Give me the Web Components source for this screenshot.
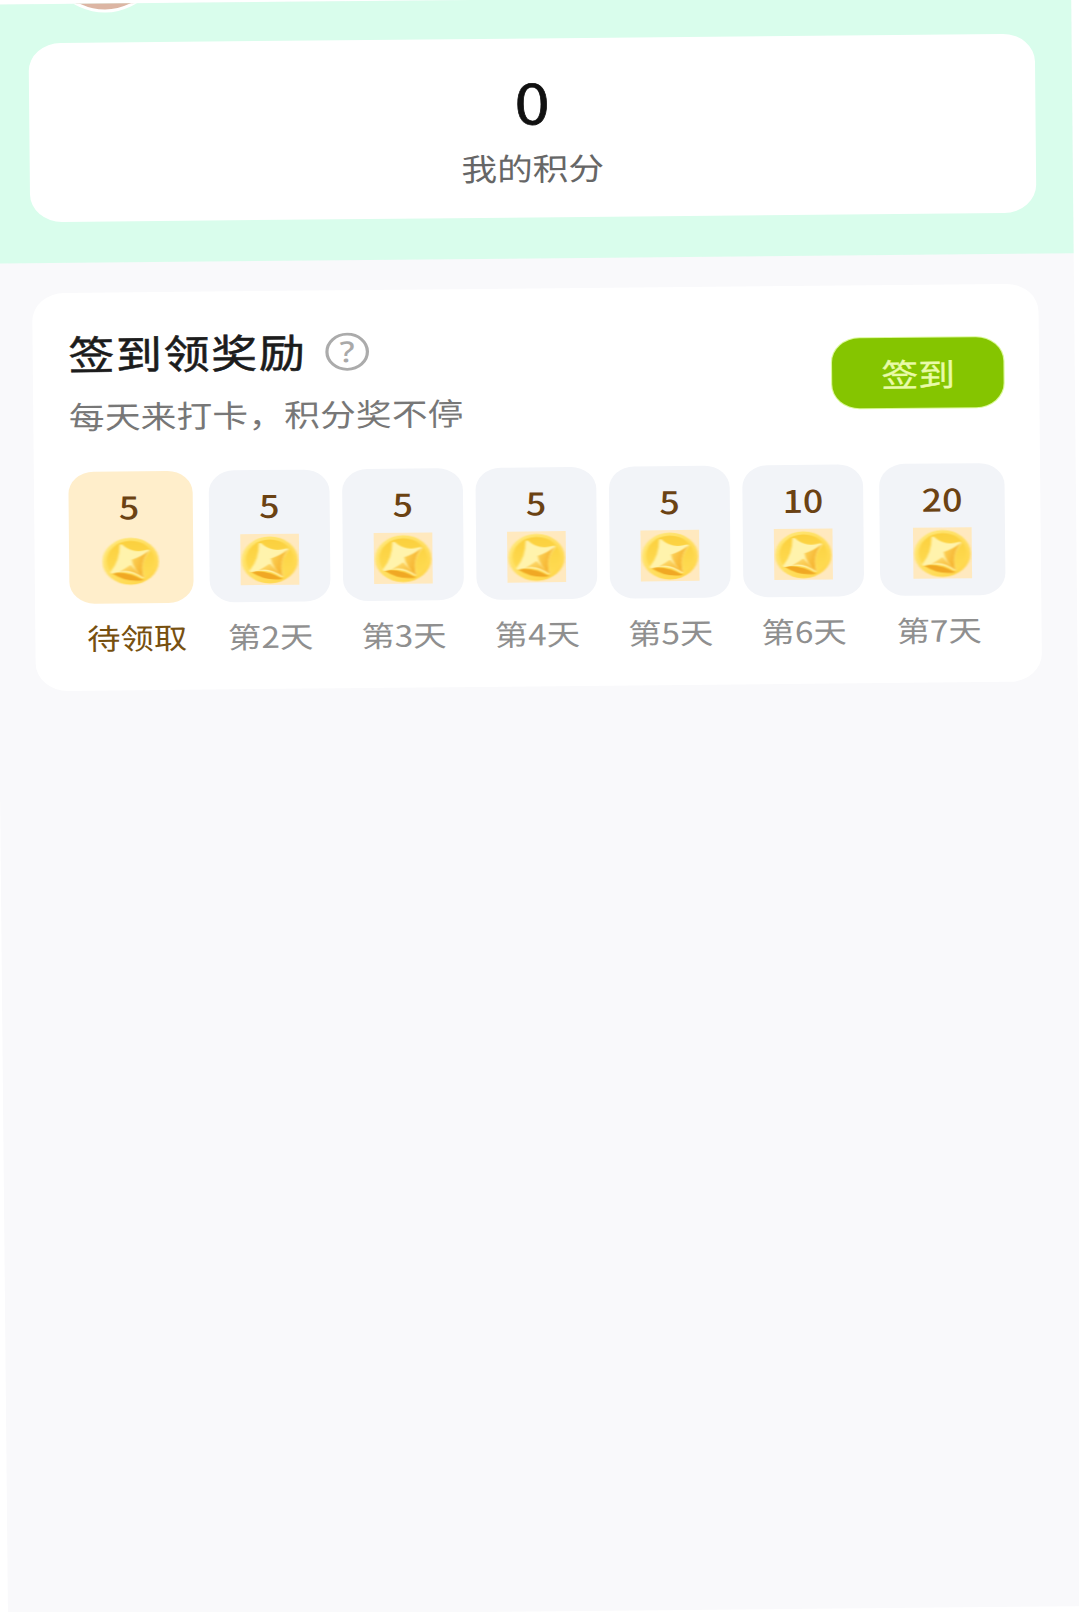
<!doctype html>
<html lang="zh">
<head>
<meta charset="utf-8">
<title>签到领奖励</title>
<style>
html,body{margin:0;padding:0;background:#fff;overflow:hidden;height:1612px}
body{font-family:"Noto Sans CJK SC","Noto Sans",sans-serif}
</style>
</head>
<body>
<page-root>
  <score-band value="0" label="我的积分"></score-band>
  <signin-card title-text="签到领奖励" sub="每天来打卡，积分奖不停" action="签到">
    <day-tile points="5" label="待领取" active></day-tile>
    <day-tile points="5" label="第2天"></day-tile>
    <day-tile points="5" label="第3天"></day-tile>
    <day-tile points="5" label="第4天"></day-tile>
    <day-tile points="5" label="第5天"></day-tile>
    <day-tile points="10" label="第6天"></day-tile>
    <day-tile points="20" label="第7天" last></day-tile>
  </signin-card>
</page-root>
<script>
function make(name, html){
  customElements.define(name, class extends HTMLElement{
    constructor(){super();this.attachShadow({mode:'open'});}
    connectedCallback(){
      const a=n=>this.getAttribute(n)||'';
      this.shadowRoot.innerHTML=html(a);
    }
  });
}
make('page-root',()=>`<style>
:host{display:block;width:938.3px;height:1612px;background:#f9f9fb;transform-origin:0 0;
transform:translate(-7.5px,4.6px) rotate(-0.55deg) scaleX(1.15);
font-family:"Noto Sans CJK SC","Noto Sans",sans-serif}
</style><slot></slot>`);

make('score-band',a=>`<style>
:host{display:block;position:relative;height:258.5px;box-sizing:border-box;padding:39px 32px 0 30.5px;background:#d9fdec;overflow:hidden}
.avatar{position:absolute;left:40px;top:-141px;width:110px;height:144px;border-radius:50%;background:#dcb5a3;border:3px solid #fff;box-sizing:content-box}
.card{height:179px;background:#fff;border-radius:28px;display:flex;flex-direction:column;align-items:center}
.v{font-size:55px;line-height:64px;margin-top:30px;font-weight:400;-webkit-text-stroke:.7px #111;color:#111}
.l{font-size:31px;line-height:40px;margin-top:15px;color:#666}
</style><div class="avatar"></div><div class="card"><div class="v">${a('value')}</div><div class="l">${a('label')}</div></div>`);

make('help-icon',()=>`<style>:host{display:inline-flex;width:39px;height:39px;margin-top:3px}svg{display:block}
text{font:500 29px "Noto Sans",sans-serif;fill:#a9a9a9}</style>
<svg viewBox="0 0 39 39" width="39" height="39"><circle cx="19.5" cy="19.5" r="17.6" fill="none" stroke="#ababab" stroke-width="2.8"/><text x="19.5" y="30" text-anchor="middle">?</text></svg>`);

make('sign-button',()=>`<style>
:host{display:flex;align-items:center;justify-content:center;width:149px;height:70px;border-radius:24px;background:#85c500;box-shadow:0 0 0 1px #dbf99a;color:#e9fba9;font-size:32px;letter-spacing:0;-webkit-text-stroke:.35px #e9fba9;box-sizing:border-box}
</style><slot></slot>`);

make('signin-card',a=>`<style>
:host{display:block;margin:30.5px 31px 0 32px;height:398px;box-sizing:border-box;padding:35px 31px 33px 30px;background:#fff;border-radius:28px}
.head{display:flex;justify-content:space-between;align-items:flex-start}
.t{display:flex;align-items:center;gap:16px;margin-left:1px;height:50px}
h2{margin:0;font-size:40px;line-height:50px;font-weight:400;-webkit-text-stroke:.55px #1c1c1c;letter-spacing:1.4px;color:#1c1c1c}
p{margin:16.5px 0 0 1px;font-size:31px;line-height:42px;letter-spacing:.2px;color:#777}
sign-button{margin-top:18px}
.days{display:flex;gap:11px;margin-top:35.5px}
</style>
<div class="head"><div><div class="t"><h2>${a('title-text')}</h2><help-icon></help-icon></div><p>${a('sub')}</p></div>
<sign-button>${a('action')}</sign-button></div>
<div class="days"><slot></slot></div>`);

make('gold-coin',()=>`<style>:host{display:block;width:51px;height:51px}svg{display:block}.soft{filter:blur(.7px)}</style>
<svg viewBox="0 0 50 50" width="51" height="51">
<defs>
<linearGradient id="g" x1="0" y1="0" x2="1" y2="1"><stop offset="0" stop-color="#ffe97c"/><stop offset="1" stop-color="#ffd444"/></linearGradient>
<linearGradient id="i" x1="0" y1="0" x2="0" y2="1"><stop offset="0" stop-color="#fbd03e"/><stop offset="1" stop-color="#ffdd55"/></linearGradient>
<linearGradient id="o" x1="0" y1="0" x2="1" y2=".6"><stop offset="0" stop-color="#fdd860"/><stop offset="1" stop-color="#f4a820"/></linearGradient>
<linearGradient id="b" x1="0" y1="0" x2=".6" y2="1"><stop offset="0" stop-color="#ffe27a"/><stop offset="1" stop-color="#f6b42e"/></linearGradient>
</defs>
<g class="soft">
<ellipse cx="25" cy="25.5" rx="24" ry="23" fill="url(#g)"/>
<ellipse cx="25" cy="25" rx="20.5" ry="19.5" fill="url(#i)"/>
<path d="M9 37 Q22 35 36 44 Q22 47 9 37Z" fill="#f0a824"/>
<path d="M17 10 Q26 20 40 15.500 Q31 27 35 41 Q24 32 9 36 Q17 25 17 10Z" fill="#fff3ac" stroke="#fff3ac" stroke-width="2.5" stroke-linejoin="round"/>
<path d="M26 24 Q33 22 41 15 Q32 27 36 42 Q27 33 26 24Z" fill="url(#o)"/>
<path d="M15 36 Q24 32 36 42 Q30 36 25 29 Q20 33 15 36Z" fill="url(#b)"/>
</g>
</svg>`);

make('day-tile',a=>`<style>
:host{display:block;flex:0 0 105px;width:105px}
:host([active]){flex-basis:108px;width:108px;margin-right:3px}
:host([last]){flex-basis:109px;width:109px;margin-left:3px}
.box{height:132px;border-radius:22px;background:#f2f4f8;display:flex;flex-direction:column;align-items:center;box-sizing:border-box;padding-top:15px}
:host([active]) .box{background:#ffeecb}
.n{font-size:31px;line-height:40px;font-weight:500;color:#6b4213;height:40px}
.c{margin-top:9px;background:#ffe9bf;width:51px;height:51px}
:host([active]) .c{background:transparent;margin-left:-1px}
:host([active]) .n{margin-left:-3px}
.lb{margin-top:13px;text-align:center;font-size:29px;line-height:40px;color:#8f8f8f;white-space:nowrap}
:host([active]) .lb{color:#77500f;padding-left:9px}
:host([last]) .lb{padding-right:7px}
</style><div class="box"><div class="n">${a('points')}</div><div class="c"><gold-coin></gold-coin></div></div><div class="lb">${a('label')}</div>`);
</script>
</body>
</html>
